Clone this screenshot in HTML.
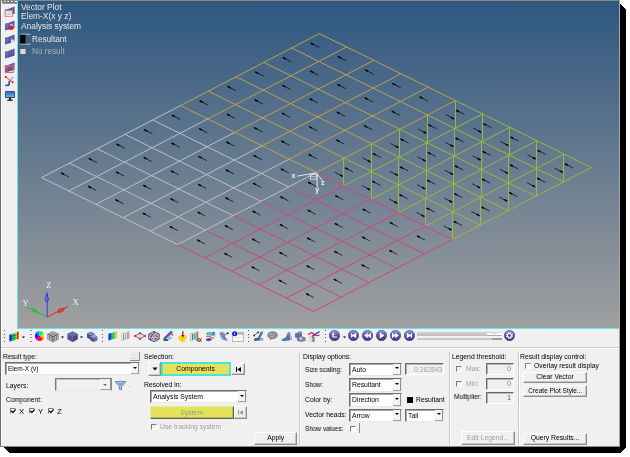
<!DOCTYPE html>
<html><head><meta charset="utf-8">
<style>
*{box-sizing:border-box}
html,body{margin:0;padding:0;background:#fff;width:630px;height:457px;overflow:hidden}
body{position:relative;font-family:"Liberation Sans",sans-serif;-webkit-font-smoothing:antialiased}
.t,.vt{will-change:transform}
.a{position:absolute}
#win{left:0;top:0;width:620px;height:447px;background:#f0f0f0;border:1px solid #8a8a8a;border-left-color:#6c6c6c;border-right-color:#a8a8a8;border-top-color:#8a8686}
#vp{left:18px;top:1px;width:601px;height:327px;background:linear-gradient(#2e5780,#a0a0a0)}
.vt{color:#e6e6e6;font-size:8.4px;line-height:9.3px;white-space:nowrap}
.t{font-size:6.8px;white-space:nowrap;color:#000;line-height:8px}
.dis{color:#a0a0a0}
.combo{background:#fff;border:1px solid;border-color:#6e6e6e #e8e8e8 #e8e8e8 #6e6e6e;box-shadow:inset 1px 1px 0 #a8a8a8}
.combo .dd{position:absolute;right:0;top:0;bottom:0;width:8px;background:#f4f4f4;border-right:1px solid #909090;border-bottom:1px solid #a0a0a0}
.combo .dd:after{content:"";position:absolute;left:2.5px;top:3.8px;border-left:2px solid transparent;border-right:2px solid transparent;border-top:2px solid #000}
.btn{background:#f0f0f0;border:1px solid;border-color:#fff #8c8c8c #8c8c8c #fff;box-shadow:inset -1px -1px 0 #c8c8c8;text-align:center}
.fld{background:#f0f0f0;border:1px solid;border-color:#6a6a6a #fff #fff #6a6a6a;box-shadow:inset 1px 1px 0 #b4b4b4}
.cb{width:6px;height:6px;border:1px solid;border-color:#7a7a7a #fff #fff #7a7a7a;background:#fff}
.sep{width:2px;border-left:1px solid #c8c8c8;border-right:1px solid #fff}
.ybtn{background:#e6e25a;border:2px solid #48e4d8;box-shadow:-1px 0 0 #909080}
.ybtn2{background:#e4e45c;border:1px solid;border-color:#ecec90 #606050 #606050 #ecec90;box-shadow:inset -1px -1px 0 #b8b860}
.cdis{background:#f0f0f0;border-color:#7a7a7a #8a8a8a #e8e8e8 #7a7a7a;box-shadow:inset 1px 1px 0 #c0c0c0}
.ddd:after{border-top-color:#686868 !important}
.cdis .dd{background:#f0f0f0;width:11px;border-left:1px solid #fafafa}
.cdis .dd:after{left:2.5px;top:4.5px}
.cbd{background:#f0f0f0}
.arr .h{stroke-width:1.5;stroke-linecap:round}
</style></head><body>
<svg class="a" style="left:0;top:0" width="630" height="457"><polygon points="620,3.5 626,9.5 626,447 620,453 9.5,453 3.5,447 620,447" fill="#000" shape-rendering="crispEdges"/></svg>
<div id="win" class="a"></div>
<!-- left strip -->
<div class="a" style="left:1px;top:1px;width:1px;height:445px;background:#fcfcfc"></div>
<div class="a" style="left:16px;top:1px;width:1px;height:328px;background:#f8e8e8"></div>
<div class="a" style="left:17px;top:1px;width:1px;height:328px;background:#5fe8ee"></div>
<div class="a" style="left:17px;top:328px;width:602px;height:1px;background:#5fe8ee"></div>
<svg class="a" style="left:2px;top:1px" width="15" height="3"><rect x="0" y="1" width="15" height="1.6" fill="#707070"/><g fill="#6a6a6a"><rect x="0.5" y="0" width="1.5" height="1"/><rect x="3.5" y="0" width="2" height="1"/><rect x="7" y="0" width="2" height="1"/><rect x="10.5" y="0" width="2" height="1"/></g><g fill="#fff"><rect x="2" y="0" width="1.5" height="1"/><rect x="5.5" y="0" width="1.5" height="1"/><rect x="9" y="0" width="1.5" height="1"/><rect x="12.5" y="0" width="1.5" height="1"/></g></svg>
<div id="vp" class="a"></div>
<svg class="a" style="left:0;top:0;will-change:transform" width="630" height="329">
<g fill="none"><line x1="455.35" y1="100.55" x2="591.3" y2="167.5" stroke="#98b83e" stroke-width="1"/><line x1="427.57" y1="114.95" x2="563.52" y2="181.9" stroke="#98b83e" stroke-width="1"/><line x1="399.79" y1="129.34" x2="535.74" y2="196.29" stroke="#98b83e" stroke-width="1"/><line x1="372.01" y1="143.74" x2="507.96" y2="210.69" stroke="#98b83e" stroke-width="1"/><line x1="344.23" y1="158.13" x2="480.18" y2="225.08" stroke="#98b83e" stroke-width="1"/><line x1="482.54" y1="113.94" x2="343.64" y2="185.91" stroke="#98b83e" stroke-width="1"/><line x1="509.73" y1="127.33" x2="370.83" y2="199.31" stroke="#98b83e" stroke-width="1"/><line x1="536.92" y1="140.72" x2="398.02" y2="212.69" stroke="#98b83e" stroke-width="1"/><line x1="564.11" y1="154.11" x2="425.21" y2="226.08" stroke="#98b83e" stroke-width="1"/><line x1="591.3" y1="167.5" x2="452.4" y2="239.47" stroke="#98b83e" stroke-width="1"/><line x1="455.5" y1="100.55" x2="455.5" y2="128.34" stroke="#98b83e" stroke-width="1"/><line x1="482.5" y1="113.94" x2="482.5" y2="141.73" stroke="#98b83e" stroke-width="1"/><line x1="509.5" y1="127.33" x2="509.5" y2="155.12" stroke="#98b83e" stroke-width="1"/><line x1="536.5" y1="140.72" x2="536.5" y2="168.5" stroke="#98b83e" stroke-width="1"/><line x1="563.5" y1="154.11" x2="563.5" y2="181.9" stroke="#98b83e" stroke-width="1"/><line x1="427.5" y1="114.95" x2="427.5" y2="142.73" stroke="#98b83e" stroke-width="1"/><line x1="454.5" y1="128.34" x2="454.5" y2="156.12" stroke="#98b83e" stroke-width="1"/><line x1="481.5" y1="141.73" x2="481.5" y2="169.51" stroke="#98b83e" stroke-width="1"/><line x1="508.5" y1="155.12" x2="508.5" y2="182.9" stroke="#98b83e" stroke-width="1"/><line x1="536.5" y1="168.5" x2="536.5" y2="196.29" stroke="#98b83e" stroke-width="1"/><line x1="399.5" y1="129.34" x2="399.5" y2="157.12" stroke="#98b83e" stroke-width="1"/><line x1="426.5" y1="142.73" x2="426.5" y2="170.51" stroke="#98b83e" stroke-width="1"/><line x1="453.5" y1="156.12" x2="453.5" y2="183.91" stroke="#98b83e" stroke-width="1"/><line x1="481.5" y1="169.51" x2="481.5" y2="197.3" stroke="#98b83e" stroke-width="1"/><line x1="508.5" y1="182.9" x2="508.5" y2="210.69" stroke="#98b83e" stroke-width="1"/><line x1="371.5" y1="143.74" x2="371.5" y2="171.52" stroke="#98b83e" stroke-width="1"/><line x1="398.5" y1="157.12" x2="398.5" y2="184.91" stroke="#98b83e" stroke-width="1"/><line x1="426.5" y1="170.51" x2="426.5" y2="198.3" stroke="#98b83e" stroke-width="1"/><line x1="453.5" y1="183.91" x2="453.5" y2="211.69" stroke="#98b83e" stroke-width="1"/><line x1="480.5" y1="197.3" x2="480.5" y2="225.08" stroke="#98b83e" stroke-width="1"/><line x1="343.5" y1="158.13" x2="343.5" y2="185.91" stroke="#98b83e" stroke-width="1"/><line x1="371.5" y1="171.52" x2="371.5" y2="199.31" stroke="#98b83e" stroke-width="1"/><line x1="398.5" y1="184.91" x2="398.5" y2="212.69" stroke="#98b83e" stroke-width="1"/><line x1="425.5" y1="198.3" x2="425.5" y2="226.08" stroke="#98b83e" stroke-width="1"/><line x1="452.5" y1="211.69" x2="452.5" y2="239.47" stroke="#98b83e" stroke-width="1"/><line x1="316.45" y1="172.52" x2="452.4" y2="239.47" stroke="#c84880" stroke-width="1"/><line x1="288.67" y1="186.92" x2="424.62" y2="253.87" stroke="#c84880" stroke-width="1"/><line x1="260.89" y1="201.31" x2="396.84" y2="268.26" stroke="#c84880" stroke-width="1"/><line x1="233.11" y1="215.71" x2="369.06" y2="282.66" stroke="#c84880" stroke-width="1"/><line x1="205.33" y1="230.11" x2="341.28" y2="297.06" stroke="#c84880" stroke-width="1"/><line x1="177.55" y1="244.5" x2="313.5" y2="311.45" stroke="#c84880" stroke-width="1"/><line x1="343.64" y1="185.91" x2="204.74" y2="257.89" stroke="#c84880" stroke-width="1"/><line x1="370.83" y1="199.31" x2="231.93" y2="271.28" stroke="#c84880" stroke-width="1"/><line x1="398.02" y1="212.69" x2="259.12" y2="284.67" stroke="#c84880" stroke-width="1"/><line x1="425.21" y1="226.08" x2="286.31" y2="298.06" stroke="#c84880" stroke-width="1"/><line x1="452.4" y1="239.47" x2="313.5" y2="311.45" stroke="#c84880" stroke-width="1"/><line x1="152.72" y1="119.97" x2="288.67" y2="186.92" stroke="#bfc0c2" stroke-width="1"/><line x1="124.94" y1="134.37" x2="260.89" y2="201.31" stroke="#bfc0c2" stroke-width="1"/><line x1="97.16" y1="148.76" x2="233.11" y2="215.71" stroke="#bfc0c2" stroke-width="1"/><line x1="69.38" y1="163.16" x2="205.33" y2="230.11" stroke="#bfc0c2" stroke-width="1"/><line x1="41.6" y1="177.55" x2="177.55" y2="244.5" stroke="#bfc0c2" stroke-width="1"/><line x1="180.5" y1="105.57" x2="41.6" y2="177.55" stroke="#bfc0c2" stroke-width="1"/><line x1="207.69" y1="118.96" x2="68.79" y2="190.94" stroke="#bfc0c2" stroke-width="1"/><line x1="234.88" y1="132.35" x2="95.98" y2="204.33" stroke="#bfc0c2" stroke-width="1"/><line x1="262.07" y1="145.75" x2="123.17" y2="217.72" stroke="#bfc0c2" stroke-width="1"/><line x1="289.26" y1="159.13" x2="150.36" y2="231.11" stroke="#bfc0c2" stroke-width="1"/><line x1="316.45" y1="172.52" x2="177.55" y2="244.5" stroke="#bfc0c2" stroke-width="1"/><line x1="319.4" y1="33.6" x2="455.35" y2="100.55" stroke="#c0a04c" stroke-width="1"/><line x1="291.62" y1="48" x2="427.57" y2="114.95" stroke="#c0a04c" stroke-width="1"/><line x1="263.84" y1="62.39" x2="399.79" y2="129.34" stroke="#c0a04c" stroke-width="1"/><line x1="236.06" y1="76.78" x2="372.01" y2="143.74" stroke="#c0a04c" stroke-width="1"/><line x1="208.28" y1="91.18" x2="344.23" y2="158.13" stroke="#c0a04c" stroke-width="1"/><line x1="180.5" y1="105.57" x2="316.45" y2="172.52" stroke="#c0a04c" stroke-width="1"/><line x1="319.4" y1="33.6" x2="180.5" y2="105.57" stroke="#c0a04c" stroke-width="1"/><line x1="346.59" y1="46.99" x2="207.69" y2="118.96" stroke="#c0a04c" stroke-width="1"/><line x1="373.78" y1="60.38" x2="234.88" y2="132.35" stroke="#c0a04c" stroke-width="1"/><line x1="400.97" y1="73.77" x2="262.07" y2="145.75" stroke="#c0a04c" stroke-width="1"/><line x1="428.16" y1="87.16" x2="289.26" y2="159.13" stroke="#c0a04c" stroke-width="1"/><line x1="455.35" y1="100.55" x2="316.45" y2="172.52" stroke="#c0a04c" stroke-width="1"/></g><g stroke="#000" stroke-width=".7" class="arr"><line x1="319.11" y1="47.49" x2="311.11" y2="43.29"/><line class="h" x1="313.11" y1="44.34" x2="311.11" y2="43.29"/><line x1="346.3" y1="60.88" x2="338.34" y2="56.71"/><line class="h" x1="340.33" y1="57.75" x2="338.34" y2="56.71"/><line x1="373.49" y1="74.27" x2="365.58" y2="70.12"/><line class="h" x1="367.56" y1="71.16" x2="365.58" y2="70.12"/><line x1="400.68" y1="87.66" x2="392.82" y2="83.54"/><line class="h" x1="394.78" y1="84.57" x2="392.82" y2="83.54"/><line x1="427.87" y1="101.05" x2="420.06" y2="96.95"/><line class="h" x1="422.01" y1="97.98" x2="420.06" y2="96.95"/><line x1="445.89" y1="114.61" x2="453.49" y2="118.61"/><line class="h" x1="451.59" y1="117.61" x2="453.49" y2="118.61"/><line x1="464.22" y1="114.28" x2="456.62" y2="110.48"/><line class="h" x1="458.52" y1="111.43" x2="456.62" y2="110.48"/><line x1="473.08" y1="128" x2="480.68" y2="132"/><line class="h" x1="478.78" y1="131" x2="480.68" y2="132"/><line x1="491.41" y1="127.67" x2="483.81" y2="123.87"/><line class="h" x1="485.71" y1="124.82" x2="483.81" y2="123.87"/><line x1="500.27" y1="141.39" x2="507.87" y2="145.39"/><line class="h" x1="505.97" y1="144.39" x2="507.87" y2="145.39"/><line x1="518.6" y1="141.06" x2="511" y2="137.25"/><line class="h" x1="512.9" y1="138.2" x2="511" y2="137.25"/><line x1="527.46" y1="154.78" x2="535.06" y2="158.78"/><line class="h" x1="533.16" y1="157.78" x2="535.06" y2="158.78"/><line x1="545.79" y1="154.45" x2="538.19" y2="150.65"/><line class="h" x1="540.09" y1="151.59" x2="538.19" y2="150.65"/><line x1="554.65" y1="168.17" x2="562.25" y2="172.17"/><line class="h" x1="560.35" y1="171.17" x2="562.25" y2="172.17"/><line x1="572.98" y1="167.84" x2="565.38" y2="164.03"/><line class="h" x1="567.28" y1="164.98" x2="565.38" y2="164.03"/><line x1="291.32" y1="61.89" x2="283.37" y2="57.71"/><line class="h" x1="285.36" y1="58.76" x2="283.37" y2="57.71"/><line x1="318.51" y1="75.28" x2="310.61" y2="71.13"/><line class="h" x1="312.59" y1="72.17" x2="310.61" y2="71.13"/><line x1="345.7" y1="88.67" x2="337.85" y2="84.54"/><line class="h" x1="339.81" y1="85.57" x2="337.85" y2="84.54"/><line x1="372.89" y1="102.06" x2="365.09" y2="97.96"/><line class="h" x1="367.04" y1="98.98" x2="365.09" y2="97.96"/><line x1="400.08" y1="115.45" x2="392.32" y2="111.37"/><line class="h" x1="394.26" y1="112.39" x2="392.32" y2="111.37"/><line x1="418.11" y1="129.01" x2="425.71" y2="133.01"/><line class="h" x1="423.81" y1="132.01" x2="425.71" y2="133.01"/><line x1="436.44" y1="128.67" x2="428.84" y2="124.87"/><line class="h" x1="430.74" y1="125.82" x2="428.84" y2="124.87"/><line x1="445.3" y1="142.4" x2="452.9" y2="146.4"/><line class="h" x1="451" y1="145.4" x2="452.9" y2="146.4"/><line x1="463.63" y1="142.06" x2="456.03" y2="138.26"/><line class="h" x1="457.93" y1="139.21" x2="456.03" y2="138.26"/><line x1="472.49" y1="155.78" x2="480.09" y2="159.78"/><line class="h" x1="478.19" y1="158.78" x2="480.09" y2="159.78"/><line x1="490.82" y1="155.45" x2="483.22" y2="151.65"/><line class="h" x1="485.12" y1="152.6" x2="483.22" y2="151.65"/><line x1="499.68" y1="169.17" x2="507.28" y2="173.17"/><line class="h" x1="505.38" y1="172.17" x2="507.28" y2="173.17"/><line x1="518.01" y1="168.84" x2="510.41" y2="165.04"/><line class="h" x1="512.31" y1="165.99" x2="510.41" y2="165.04"/><line x1="526.87" y1="182.56" x2="534.47" y2="186.56"/><line class="h" x1="532.57" y1="185.56" x2="534.47" y2="186.56"/><line x1="545.2" y1="182.23" x2="537.6" y2="178.43"/><line class="h" x1="539.5" y1="179.38" x2="537.6" y2="178.43"/><line x1="263.55" y1="76.28" x2="255.64" y2="72.13"/><line class="h" x1="257.62" y1="73.17" x2="255.64" y2="72.13"/><line x1="290.74" y1="89.67" x2="282.88" y2="85.55"/><line class="h" x1="284.84" y1="86.58" x2="282.88" y2="85.55"/><line x1="317.93" y1="103.06" x2="310.12" y2="98.96"/><line class="h" x1="312.07" y1="99.99" x2="310.12" y2="98.96"/><line x1="345.12" y1="116.45" x2="337.36" y2="112.38"/><line class="h" x1="339.3" y1="113.4" x2="337.36" y2="112.38"/><line x1="372.31" y1="129.84" x2="364.59" y2="125.79"/><line class="h" x1="366.52" y1="126.81" x2="364.59" y2="125.79"/><line x1="390.33" y1="143.4" x2="397.93" y2="147.4"/><line class="h" x1="396.03" y1="146.4" x2="397.93" y2="147.4"/><line x1="408.66" y1="143.07" x2="401.06" y2="139.27"/><line class="h" x1="402.96" y1="140.22" x2="401.06" y2="139.27"/><line x1="417.52" y1="156.79" x2="425.12" y2="160.79"/><line class="h" x1="423.22" y1="159.79" x2="425.12" y2="160.79"/><line x1="435.85" y1="156.46" x2="428.25" y2="152.66"/><line class="h" x1="430.15" y1="153.6" x2="428.25" y2="152.66"/><line x1="444.71" y1="170.18" x2="452.31" y2="174.18"/><line class="h" x1="450.41" y1="173.18" x2="452.31" y2="174.18"/><line x1="463.04" y1="169.84" x2="455.44" y2="166.04"/><line class="h" x1="457.34" y1="166.99" x2="455.44" y2="166.04"/><line x1="471.9" y1="183.57" x2="479.5" y2="187.57"/><line class="h" x1="477.6" y1="186.57" x2="479.5" y2="187.57"/><line x1="490.23" y1="183.23" x2="482.63" y2="179.43"/><line class="h" x1="484.53" y1="180.38" x2="482.63" y2="179.43"/><line x1="499.09" y1="196.96" x2="506.69" y2="200.96"/><line class="h" x1="504.79" y1="199.96" x2="506.69" y2="200.96"/><line x1="517.42" y1="196.62" x2="509.82" y2="192.82"/><line class="h" x1="511.72" y1="193.77" x2="509.82" y2="192.82"/><line x1="235.76" y1="90.68" x2="227.91" y2="86.55"/><line class="h" x1="229.87" y1="87.58" x2="227.91" y2="86.55"/><line x1="262.95" y1="104.07" x2="255.15" y2="99.97"/><line class="h" x1="257.1" y1="100.99" x2="255.15" y2="99.97"/><line x1="290.14" y1="117.46" x2="282.38" y2="113.38"/><line class="h" x1="284.32" y1="114.4" x2="282.38" y2="113.38"/><line x1="317.33" y1="130.85" x2="309.62" y2="126.8"/><line class="h" x1="311.55" y1="127.81" x2="309.62" y2="126.8"/><line x1="344.52" y1="144.24" x2="336.86" y2="140.21"/><line class="h" x1="338.78" y1="141.22" x2="336.86" y2="140.21"/><line x1="362.55" y1="157.79" x2="370.15" y2="161.79"/><line class="h" x1="368.25" y1="160.79" x2="370.15" y2="161.79"/><line x1="380.88" y1="157.46" x2="373.28" y2="153.66"/><line class="h" x1="375.18" y1="154.61" x2="373.28" y2="153.66"/><line x1="389.74" y1="171.19" x2="397.34" y2="175.19"/><line class="h" x1="395.44" y1="174.19" x2="397.34" y2="175.19"/><line x1="408.07" y1="170.85" x2="400.47" y2="167.05"/><line class="h" x1="402.37" y1="168" x2="400.47" y2="167.05"/><line x1="416.93" y1="184.58" x2="424.53" y2="188.58"/><line class="h" x1="422.63" y1="187.58" x2="424.53" y2="188.58"/><line x1="435.26" y1="184.24" x2="427.66" y2="180.44"/><line class="h" x1="429.56" y1="181.39" x2="427.66" y2="180.44"/><line x1="444.12" y1="197.97" x2="451.72" y2="201.97"/><line class="h" x1="449.82" y1="200.97" x2="451.72" y2="201.97"/><line x1="462.45" y1="197.63" x2="454.85" y2="193.83"/><line class="h" x1="456.75" y1="194.78" x2="454.85" y2="193.83"/><line x1="471.31" y1="211.36" x2="478.91" y2="215.36"/><line class="h" x1="477.01" y1="214.36" x2="478.91" y2="215.36"/><line x1="489.64" y1="211.02" x2="482.04" y2="207.22"/><line class="h" x1="483.94" y1="208.17" x2="482.04" y2="207.22"/><line x1="207.98" y1="105.07" x2="200.18" y2="100.97"/><line class="h" x1="202.13" y1="102" x2="200.18" y2="100.97"/><line x1="235.17" y1="118.46" x2="227.41" y2="114.39"/><line class="h" x1="229.35" y1="115.41" x2="227.41" y2="114.39"/><line x1="262.37" y1="131.85" x2="254.65" y2="127.8"/><line class="h" x1="256.58" y1="128.82" x2="254.65" y2="127.8"/><line x1="289.56" y1="145.24" x2="281.89" y2="141.22"/><line class="h" x1="283.81" y1="142.22" x2="281.89" y2="141.22"/><line x1="316.75" y1="158.63" x2="309.13" y2="154.63"/><line class="h" x1="311.03" y1="155.63" x2="309.13" y2="154.63"/><line x1="334.77" y1="172.19" x2="342.37" y2="176.19"/><line class="h" x1="340.47" y1="175.19" x2="342.37" y2="176.19"/><line x1="353.1" y1="171.85" x2="345.5" y2="168.05"/><line class="h" x1="347.4" y1="169" x2="345.5" y2="168.05"/><line x1="361.96" y1="185.58" x2="369.56" y2="189.58"/><line class="h" x1="367.66" y1="188.58" x2="369.56" y2="189.58"/><line x1="380.29" y1="185.25" x2="372.69" y2="181.45"/><line class="h" x1="374.59" y1="182.4" x2="372.69" y2="181.45"/><line x1="389.15" y1="198.97" x2="396.75" y2="202.97"/><line class="h" x1="394.85" y1="201.97" x2="396.75" y2="202.97"/><line x1="407.48" y1="198.63" x2="399.88" y2="194.83"/><line class="h" x1="401.78" y1="195.78" x2="399.88" y2="194.83"/><line x1="416.34" y1="212.36" x2="423.94" y2="216.36"/><line class="h" x1="422.04" y1="215.36" x2="423.94" y2="216.36"/><line x1="434.67" y1="212.03" x2="427.07" y2="208.22"/><line class="h" x1="428.97" y1="209.17" x2="427.07" y2="208.22"/><line x1="443.53" y1="225.75" x2="451.13" y2="229.75"/><line class="h" x1="449.23" y1="228.75" x2="451.13" y2="229.75"/><line x1="461.86" y1="225.41" x2="454.26" y2="221.61"/><line class="h" x1="456.16" y1="222.56" x2="454.26" y2="221.61"/><line x1="180.2" y1="119.47" x2="172.44" y2="115.39"/><line class="h" x1="174.38" y1="116.41" x2="172.44" y2="115.39"/><line x1="207.39" y1="132.86" x2="199.68" y2="128.81"/><line class="h" x1="201.61" y1="129.82" x2="199.68" y2="128.81"/><line x1="234.58" y1="146.25" x2="226.92" y2="142.22"/><line class="h" x1="228.84" y1="143.23" x2="226.92" y2="142.22"/><line x1="261.77" y1="159.64" x2="254.16" y2="155.64"/><line class="h" x1="256.06" y1="156.64" x2="254.16" y2="155.64"/><line x1="288.96" y1="173.03" x2="281.4" y2="169.05"/><line class="h" x1="283.29" y1="170.05" x2="281.4" y2="169.05"/><line x1="316.15" y1="186.42" x2="308.63" y2="182.47"/><line class="h" x1="310.51" y1="183.46" x2="308.63" y2="182.47"/><line x1="343.34" y1="199.81" x2="335.87" y2="195.88"/><line class="h" x1="337.74" y1="196.87" x2="335.87" y2="195.88"/><line x1="370.53" y1="213.2" x2="363.11" y2="209.3"/><line class="h" x1="364.97" y1="210.27" x2="363.11" y2="209.3"/><line x1="397.72" y1="226.59" x2="390.35" y2="222.72"/><line class="h" x1="392.19" y1="223.68" x2="390.35" y2="222.72"/><line x1="424.91" y1="239.98" x2="417.59" y2="236.13"/><line class="h" x1="419.42" y1="237.09" x2="417.59" y2="236.13"/><line x1="152.42" y1="133.86" x2="144.71" y2="129.81"/><line class="h" x1="146.64" y1="130.83" x2="144.71" y2="129.81"/><line x1="179.61" y1="147.25" x2="171.95" y2="143.23"/><line class="h" x1="173.87" y1="144.23" x2="171.95" y2="143.23"/><line x1="206.81" y1="160.64" x2="199.19" y2="156.64"/><line class="h" x1="201.09" y1="157.64" x2="199.19" y2="156.64"/><line x1="234" y1="174.03" x2="226.43" y2="170.06"/><line class="h" x1="228.32" y1="171.05" x2="226.43" y2="170.06"/><line x1="261.19" y1="187.42" x2="253.66" y2="183.47"/><line class="h" x1="255.54" y1="184.46" x2="253.66" y2="183.47"/><line x1="288.38" y1="200.81" x2="280.9" y2="196.89"/><line class="h" x1="282.77" y1="197.87" x2="280.9" y2="196.89"/><line x1="315.56" y1="214.2" x2="308.14" y2="210.3"/><line class="h" x1="310" y1="211.28" x2="308.14" y2="210.3"/><line x1="342.75" y1="227.59" x2="335.38" y2="223.72"/><line class="h" x1="337.22" y1="224.69" x2="335.38" y2="223.72"/><line x1="369.94" y1="240.98" x2="362.62" y2="237.14"/><line class="h" x1="364.45" y1="238.1" x2="362.62" y2="237.14"/><line x1="397.13" y1="254.37" x2="389.86" y2="250.55"/><line class="h" x1="391.68" y1="251.51" x2="389.86" y2="250.55"/><line x1="124.64" y1="148.26" x2="116.98" y2="144.23"/><line class="h" x1="118.9" y1="145.24" x2="116.98" y2="144.23"/><line x1="151.83" y1="161.65" x2="144.22" y2="157.65"/><line class="h" x1="146.12" y1="158.65" x2="144.22" y2="157.65"/><line x1="179.02" y1="175.04" x2="171.46" y2="171.06"/><line class="h" x1="173.35" y1="172.06" x2="171.46" y2="171.06"/><line x1="206.21" y1="188.43" x2="198.69" y2="184.48"/><line class="h" x1="200.57" y1="185.47" x2="198.69" y2="184.48"/><line x1="233.4" y1="201.82" x2="225.93" y2="197.89"/><line class="h" x1="227.8" y1="198.88" x2="225.93" y2="197.89"/><line x1="260.59" y1="215.21" x2="253.17" y2="211.31"/><line class="h" x1="255.03" y1="212.28" x2="253.17" y2="211.31"/><line x1="287.78" y1="228.6" x2="280.41" y2="224.73"/><line class="h" x1="282.25" y1="225.69" x2="280.41" y2="224.73"/><line x1="314.97" y1="241.99" x2="307.65" y2="238.14"/><line class="h" x1="309.48" y1="239.1" x2="307.65" y2="238.14"/><line x1="342.16" y1="255.38" x2="334.88" y2="251.56"/><line class="h" x1="336.7" y1="252.51" x2="334.88" y2="251.56"/><line x1="369.35" y1="268.77" x2="362.12" y2="264.97"/><line class="h" x1="363.93" y1="265.92" x2="362.12" y2="264.97"/><line x1="96.86" y1="162.65" x2="89.25" y2="158.65"/><line class="h" x1="91.15" y1="159.65" x2="89.25" y2="158.65"/><line x1="124.05" y1="176.04" x2="116.49" y2="172.07"/><line class="h" x1="118.38" y1="173.06" x2="116.49" y2="172.07"/><line x1="151.25" y1="189.43" x2="143.72" y2="185.48"/><line class="h" x1="145.6" y1="186.47" x2="143.72" y2="185.48"/><line x1="178.44" y1="202.82" x2="170.96" y2="198.9"/><line class="h" x1="172.83" y1="199.88" x2="170.96" y2="198.9"/><line x1="205.62" y1="216.21" x2="198.2" y2="212.31"/><line class="h" x1="200.06" y1="213.29" x2="198.2" y2="212.31"/><line x1="232.81" y1="229.6" x2="225.44" y2="225.73"/><line class="h" x1="227.28" y1="226.7" x2="225.44" y2="225.73"/><line x1="260" y1="242.99" x2="252.68" y2="239.15"/><line class="h" x1="254.51" y1="240.11" x2="252.68" y2="239.15"/><line x1="287.19" y1="256.38" x2="279.92" y2="252.56"/><line class="h" x1="281.74" y1="253.52" x2="279.92" y2="252.56"/><line x1="314.38" y1="269.77" x2="307.15" y2="265.98"/><line class="h" x1="308.96" y1="266.92" x2="307.15" y2="265.98"/><line x1="341.57" y1="283.16" x2="334.39" y2="279.39"/><line class="h" x1="336.19" y1="280.33" x2="334.39" y2="279.39"/><line x1="69.08" y1="177.05" x2="61.52" y2="173.07"/><line class="h" x1="63.41" y1="174.07" x2="61.52" y2="173.07"/><line x1="96.27" y1="190.44" x2="88.75" y2="186.49"/><line class="h" x1="90.63" y1="187.48" x2="88.75" y2="186.49"/><line x1="123.46" y1="203.83" x2="115.99" y2="199.9"/><line class="h" x1="117.86" y1="200.89" x2="115.99" y2="199.9"/><line x1="150.65" y1="217.22" x2="143.23" y2="213.32"/><line class="h" x1="145.09" y1="214.29" x2="143.23" y2="213.32"/><line x1="177.84" y1="230.61" x2="170.47" y2="226.74"/><line class="h" x1="172.31" y1="227.7" x2="170.47" y2="226.74"/><line x1="205.03" y1="244" x2="197.71" y2="240.15"/><line class="h" x1="199.54" y1="241.11" x2="197.71" y2="240.15"/><line x1="232.22" y1="257.39" x2="224.94" y2="253.57"/><line class="h" x1="226.76" y1="254.52" x2="224.94" y2="253.57"/><line x1="259.41" y1="270.78" x2="252.18" y2="266.98"/><line class="h" x1="253.99" y1="267.93" x2="252.18" y2="266.98"/><line x1="286.6" y1="284.17" x2="279.42" y2="280.4"/><line class="h" x1="281.22" y1="281.34" x2="279.42" y2="280.4"/><line x1="313.79" y1="297.56" x2="306.66" y2="293.81"/><line class="h" x1="308.44" y1="294.75" x2="306.66" y2="293.81"/></g><g fill="none" stroke="#f0f0f0" stroke-width=".9"><path d="M316.7 172.8 L297 176.1 M317.2 173.3 V187.8 M317.2 173.9 L322.5 180.8"/><rect x="310.3" y="174.2" width="6" height="5" stroke-width=".7"/><path d="M310.5 176.7 H316" stroke-width=".6"/></g>
<g fill="#f4f4f4" font-family="Liberation Sans" font-size="7" font-weight="bold"><text x="291.6" y="177.6">x</text><text x="315.2" y="192.4">y</text><text x="321" y="184.6">z</text></g>
<g stroke-width="1"><path d="M47.2 317 V293" stroke="#3040e0"/><path d="M47.2 317 L26.5 307.2" stroke="#20c020"/><path d="M47.2 317 L68 306.5" stroke="#e02020"/></g>
<g><ellipse cx="46.8" cy="299" rx="1.6" ry="3" fill="none" stroke="#3040e0" stroke-width="1"/><path d="M46.8 291.5 L45.5 296 H48Z" fill="#3040e0"/>
<ellipse cx="34.5" cy="310.3" rx="3" ry="1.4" transform="rotate(25 34.5 310.3)" fill="none" stroke="#20c020" stroke-width="1"/>
<ellipse cx="61" cy="310.2" rx="3.2" ry="1.4" transform="rotate(-27 61 310.2)" fill="none" stroke="#e02020" stroke-width="1"/></g>
<g fill="#f0f0f0" font-family="Liberation Serif" font-size="8.6"><text x="46.3" y="288.2">Z</text><text x="22.5" y="305.6">Y</text><text x="72.4" y="305.2">X</text></g>
<rect x="20.2" y="34.2" width="5.2" height="9.8" fill="#000"/><path d="M20 34.2 H30.5 M20 44.2 H30.5" stroke="#b8c8d8" stroke-width=".9"/>
<rect x="20.3" y="49" width="5.3" height="5" fill="#d8d8d8"/>
</svg>
<!-- viewport text -->
<div class="a vt" style="left:20.6px;top:3.3px">Vector Plot</div>
<div class="a vt" style="left:20.6px;top:12.4px">Elem-X(x y z)</div>
<div class="a vt" style="left:20.6px;top:21.6px">Analysis system</div>
<div class="a vt" style="left:32px;top:34.6px;font-size:8.2px">Resultant</div>
<div class="a vt" style="left:32px;top:46.6px;font-size:8.2px;color:#a8b0b8">No result</div>
<svg class="a" style="left:3.5px;top:6px" width="12" height="11" viewBox="0 0 12 11"><path d="M1 3.5 Q5 3 10.5 0.5 V7.5 Q5.5 9.5 1 10.5Z" fill="url(#fl)"/><g stroke="#a0a0e0" stroke-width=".4" opacity=".7"><path d="M3.5 3.2V9.8M6 2.7V9.3M8.5 1.5V8.5M1 6 Q5 5.5 10.5 3M1 8.3 Q5 7.6 10.5 5.3"/></g><rect x="1.2" y="4.6" width="7.2" height="6.2" fill="#e4f2f6" stroke="#f07060" stroke-width="1"/><path d="M3 7H7M3 8.5H7" stroke="#a0a0a0" stroke-width=".5"/></svg>
<svg class="a" style="left:3.5px;top:19.8px" width="12" height="11" viewBox="0 0 12 11"><path d="M1 3.5 Q5 3 10.5 0.5 V7.5 Q5.5 9.5 1 10.5Z" fill="url(#fl)"/><g stroke="#a0a0e0" stroke-width=".4" opacity=".7"><path d="M3.5 3.2V9.8M6 2.7V9.3M8.5 1.5V8.5M1 6 Q5 5.5 10.5 3M1 8.3 Q5 7.6 10.5 5.3"/></g><path d="M5 6.5 Q9 5 10.5 7.5 Q9 10.5 5.5 10Z" fill="#f01010"/><path d="M6 5 Q8 4 9.5 6" stroke="#fff" stroke-width="1" fill="none"/></svg>
<svg class="a" style="left:3.5px;top:33.8px" width="12" height="11" viewBox="0 0 12 11"><path d="M1 3.5 Q5 3 10.5 0.5 V7.5 Q5.5 9.5 1 10.5Z" fill="url(#fl)"/><g stroke="#a0a0e0" stroke-width=".4" opacity=".7"><path d="M3.5 3.2V9.8M6 2.7V9.3M8.5 1.5V8.5M1 6 Q5 5.5 10.5 3M1 8.3 Q5 7.6 10.5 5.3"/></g><path d="M7 5 L10.5 6 V9 L7 10Z" fill="#f4f4f4" opacity=".8"/></svg>
<svg class="a" style="left:3.5px;top:47.5px" width="12" height="11" viewBox="0 0 12 11"><path d="M1 3.5 Q5 3 10.5 0.5 V7.5 Q5.5 9.5 1 10.5Z" fill="url(#fl)"/><g stroke="#a0a0e0" stroke-width=".4" opacity=".7"><path d="M3.5 3.2V9.8M6 2.7V9.3M8.5 1.5V8.5M1 6 Q5 5.5 10.5 3M1 8.3 Q5 7.6 10.5 5.3"/></g></svg>
<svg class="a" style="left:3.5px;top:61.8px" width="12" height="11" viewBox="0 0 12 11"><path d="M1 3.5 Q5 3 10.5 0.5 V7.5 Q5.5 9.5 1 10.5Z" fill="url(#fl)"/><g stroke="#a0a0e0" stroke-width=".4" opacity=".7"><path d="M3.5 3.2V9.8M6 2.7V9.3M8.5 1.5V8.5M1 6 Q5 5.5 10.5 3M1 8.3 Q5 7.6 10.5 5.3"/></g><rect x="1.3" y="4" width="8" height="6.5" fill="none" stroke="#f06050" stroke-width="1.2"/></svg>
<svg class="a" style="left:4px;top:75.5px" width="11" height="11" viewBox="0 0 11 11"><path d="M8.5 1.5 L5.5 5.5" stroke="#b4c4dc" stroke-width="2.4" stroke-linecap="round"/><path d="M4.4 5 L6 5 L6 8.2 Q6 10.2 3.6 10.2 L1.5 10.2 Q0.8 9.3 1.3 8.4 L3.2 8.4 Q4.4 8.4 4.4 7.3Z" fill="#3a5aa0"/><path d="M1.8 1 L8.5 6.2" stroke="#f02828" stroke-width=".9"/><circle cx="1.8" cy="1" r="1.1" fill="#f02828"/><circle cx="8.6" cy="6.2" r="1.1" fill="#f02828"/></svg>
<svg class="a" style="left:4.5px;top:90.5px" width="10" height="11" viewBox="0 0 10 11"><defs><linearGradient id="scr" x1="0" y1="0" x2="0" y2="1"><stop offset="0" stop-color="#2a64c8"/><stop offset="1" stop-color="#78b4f0"/></linearGradient></defs><rect x="0.6" y="0.6" width="8.8" height="6" fill="url(#scr)" stroke="#2a3450" stroke-width=".8"/><rect x="4" y="6.8" width="2" height="1.8" fill="#101010"/><rect x="2.3" y="8.5" width="5.4" height="1.3" fill="#101010"/></svg>
<svg width="0" height="0" style="position:absolute"><defs><linearGradient id="rb" x1="0" x2="1" y1="0" y2="0"><stop offset="0" stop-color="#1028e0"/><stop offset=".2" stop-color="#1040f0"/><stop offset=".35" stop-color="#00c8f0"/><stop offset=".5" stop-color="#00e060"/><stop offset=".65" stop-color="#60e000"/><stop offset=".78" stop-color="#f0e000"/><stop offset=".88" stop-color="#f02000"/><stop offset="1" stop-color="#c02000"/></linearGradient>
<linearGradient id="rb2" x1="0" x2="1" y1="0" y2="0"><stop offset="0" stop-color="#1020a0"/><stop offset=".25" stop-color="#1050f0"/><stop offset=".45" stop-color="#00c8e8"/><stop offset=".65" stop-color="#20d040"/><stop offset=".85" stop-color="#f0e000"/><stop offset="1" stop-color="#f08000"/></linearGradient>
<linearGradient id="mb" x1="0" y1="0" x2="0" y2="1"><stop offset="0" stop-color="#a0a0e8"/><stop offset=".45" stop-color="#5a5aa8"/><stop offset="1" stop-color="#3a3a84"/></linearGradient>
<linearGradient id="fl" x1="0" x2="1" y1="0" y2="1"><stop offset="0" stop-color="#7878c0"/><stop offset="1" stop-color="#303080"/></linearGradient>
<linearGradient id="bl" x1="0" x2="1" y1="0" y2="1"><stop offset="0" stop-color="#8aa0d0"/><stop offset="1" stop-color="#3a5a98"/></linearGradient>
<radialGradient id="gb" cx=".4" cy=".35" r=".7"><stop offset="0" stop-color="#c8c8c8"/><stop offset="1" stop-color="#8c8c8c"/></radialGradient></defs></svg>
<div class="a" style="left:4px;top:330px;width:1px;height:1px;background:#505050"></div><div class="a" style="left:4px;top:334px;width:1px;height:1px;background:#505050"></div><div class="a" style="left:4px;top:337px;width:1px;height:1px;background:#505050"></div><div class="a" style="left:4px;top:341px;width:1px;height:1px;background:#505050"></div>
<svg class="a" style="left:9px;top:330.5px" width="10" height="11" viewBox="0 0 10 11"><path d="M0.3 3.8 Q5 3 9.6 0.3 V8 Q5 9.5 0.3 10.6 Z" fill="url(#rb)"/><g stroke="#000" stroke-opacity=".12" stroke-width=".5"><path d="M2.5 3.5V10M5 3.2V9.6M7.5 2V9"/><path d="M0.3 6 Q5 5.5 9.6 3M0.3 8.3Q5 7.7 9.6 5.5"/></g></svg>
<svg class="a" style="left:22px;top:336px" width="4" height="3" viewBox="0 0 4 3"><path d="M0 0.5H3L1.5 2.2z" fill="#000"/></svg>
<div class="a" style="left:29.5px;top:330px;width:2px;height:1px;background:#909090"></div><div class="a" style="left:29.5px;top:334px;width:2px;height:1px;background:#909090"></div><div class="a" style="left:29.5px;top:337px;width:2px;height:1px;background:#909090"></div><div class="a" style="left:29.5px;top:341px;width:2px;height:1px;background:#909090"></div>
<div class="a" style="left:34.8px;top:331.2px;width:9.6px;height:9.6px;border-radius:50%;background:conic-gradient(#00e8e8,#30e030 40deg,#f0f000 90deg,#ff8000 120deg,#ff0000 160deg,#ff00c0 210deg,#3000ff 270deg,#0080ff 320deg,#00e8e8)"></div>
<svg class="a" style="left:47.4px;top:330.8px" width="12" height="12" viewBox="0 0 12 12"><path d="M6 0.5 L11.3 3.15 V8.35 L6 11 L0.7 8.35 V3.15 Z" fill="#fafafa"/><path d="M0.7 3.15 L6 5.8 M0.7 3.15 L6 0.5 M2.47 2.27 L7.77 4.92 M2.47 4.03 L7.77 1.38 M4.23 1.38 L9.53 4.03 M4.23 4.92 L9.53 2.27 M6 0.5 L11.3 3.15 M6 5.8 L11.3 3.15 M0.7 3.15 L0.7 8.35 M0.7 3.15 L6 5.8 M2.47 4.03 L2.47 9.23 M0.7 4.88 L6 7.53 M4.23 4.92 L4.23 10.12 M0.7 6.62 L6 9.27 M6 5.8 L6 11 M0.7 8.35 L6 11 M6 5.8 L6 11 M6 5.8 L11.3 3.15 M7.77 4.92 L7.77 10.12 M6 7.53 L11.3 4.88 M9.53 4.03 L9.53 9.23 M6 9.27 L11.3 6.62 M11.3 3.15 L11.3 8.35 M6 11 L11.3 8.35" stroke="#1c1c1c" stroke-width=".42" fill="none"/></svg>
<svg class="a" style="left:61.3px;top:336px" width="4" height="3" viewBox="0 0 4 3"><path d="M0 0.5H3L1.5 2.2z" fill="#000"/></svg>
<svg class="a" style="left:66.6px;top:330.8px" width="12" height="12" viewBox="0 0 12 12"><path d="M5.5 0.5 L10.6 3.1 V8.3 L5.5 10.9 L0.4 8.3 V3.1 Z" fill="#40407e"/><path d="M5.5 0.5 L10.6 3.1 L5.5 5.7 L0.4 3.1Z" fill="#5a5aa8"/><path d="M5.5 5.7 L10.6 3.1 V8.3 L5.5 10.9Z" fill="#363672"/><path d="M0.4 3.1 L5.5 5.7 M0.4 3.1 L5.5 0.5 M2.1 2.23 L7.2 4.83 M2.1 3.97 L7.2 1.37 M3.8 1.37 L8.9 3.97 M3.8 4.83 L8.9 2.23 M5.5 0.5 L10.6 3.1 M5.5 5.7 L10.6 3.1 M0.4 3.1 L0.4 8.3 M0.4 3.1 L5.5 5.7 M2.1 3.97 L2.1 9.17 M0.4 4.83 L5.5 7.43 M3.8 4.83 L3.8 10.03 M0.4 6.57 L5.5 9.17 M5.5 5.7 L5.5 10.9 M0.4 8.3 L5.5 10.9 M5.5 5.7 L5.5 10.9 M5.5 5.7 L10.6 3.1 M7.2 4.83 L7.2 10.03 M5.5 7.43 L10.6 4.83 M8.9 3.97 L8.9 9.17 M5.5 9.17 L10.6 6.57 M10.6 3.1 L10.6 8.3 M5.5 10.9 L10.6 8.3" stroke="#a8a8e8" stroke-width=".35" fill="none" opacity=".5"/></svg>
<svg class="a" style="left:80.2px;top:336px" width="4" height="3" viewBox="0 0 4 3"><path d="M0 0.5H3L1.5 2.2z" fill="#000"/></svg>
<svg class="a" style="left:85.8px;top:330.8px" width="12" height="12" viewBox="0 0 12 12"><path d="M1 2.6 L4.8 0.7 L8.4 2.6 V6.8 L4.8 8.7 L1 6.8Z" fill="#4c5488"/><path d="M1 2.6 L4.8 0.7 L8.4 2.6 L4.8 4.5Z" fill="#8088c0"/><path d="M4.2 5.4 L7.7 3.6 L11.2 5.4 V9.3 L7.7 11 L4.2 9.3Z" fill="#4c5488"/><path d="M4.2 5.4 L7.7 3.6 L11.2 5.4 L7.7 7.2Z" fill="#98a0d0"/><path d="M7.7 7.2 L11.2 5.4 V9.3 L7.7 11Z" fill="#6870a8"/></svg>
<div class="a" style="left:102px;top:330px;width:1px;height:1px;background:#505050"></div><div class="a" style="left:102px;top:334px;width:1px;height:1px;background:#505050"></div><div class="a" style="left:102px;top:337px;width:1px;height:1px;background:#505050"></div><div class="a" style="left:102px;top:341px;width:1px;height:1px;background:#505050"></div>
<svg class="a" style="left:107.6px;top:331px" width="9" height="10" viewBox="0 0 9 10"><path d="M0.5 2.5 Q4.5 2.2 8.6 0.2 V7.2 Q4.5 8.2 0.5 9.6 Z" fill="url(#rb2)"/></svg>
<svg class="a" style="left:121.4px;top:331px" width="9" height="10" viewBox="0 0 9 10"><path d="M0.5 2.5 Q4.5 2.2 8.6 0.2 V7.2 Q4.5 8.2 0.5 9.6 Z" fill="#f4f4f4" stroke="#b8b8b8" stroke-width=".6"/><path d="M2.6 2.6V8.6" stroke="#4080e0" stroke-width="1"/><path d="M4.8 2.2V8" stroke="#40c040" stroke-width="1"/><path d="M7 1.2V7.4" stroke="#e05050" stroke-width="1.2"/></svg>
<svg class="a" style="left:133.6px;top:331.5px" width="12" height="8.5" viewBox="0 0 12 8.5"><path d="M0.9 4 L6 1.2 L11.1 4 L6 6.8Z" fill="#dce0f8" stroke="#505060" stroke-width=".8"/><g fill="#f02020"><ellipse cx="0.9" cy="4" rx=".9" ry="1.2"/><ellipse cx="11.1" cy="4" rx=".9" ry="1.2"/><ellipse cx="6" cy="1.3" rx=".9" ry="1.2"/><ellipse cx="6" cy="6.9" rx=".9" ry="1.3"/></g></svg>
<svg class="a" style="left:147.8px;top:330.8px" width="12" height="11.5" viewBox="0 0 12 11.5"><path d="M6 0.5 L11.2 3 V8.2 L6 10.8 L0.8 8.2 V3 Z" fill="#d8d8e8" stroke="#404048" stroke-width=".9"/><path d="M0.8 3 L6 5.6 L11.2 3 M6 5.6V10.8 M6 0.5 V5.6" stroke="#505058" stroke-width=".5" fill="none"/><g><circle cx="6" cy="1.7" r="1" fill="#e81818"/><circle cx="4.2" cy="3.6" r=".9" fill="#1830f0"/><circle cx="7.6" cy="3.6" r=".9" fill="#20b050"/><circle cx="3" cy="5.4" r="1" fill="#e81818"/><circle cx="9" cy="5.4" r="1" fill="#e81818"/><circle cx="2.5" cy="7.8" r=".9" fill="#1830f0"/><circle cx="4.4" cy="7.8" r=".9" fill="#20b050"/><circle cx="7.6" cy="7.8" r=".9" fill="#1830f0"/><circle cx="9.4" cy="7.8" r=".9" fill="#20b050"/></g></svg>
<svg class="a" style="left:162.4px;top:331px" width="12" height="11" viewBox="0 0 12 11"><path d="M9.2 1.2 L3 7.2" stroke="#4a68a8" stroke-width="2.6" stroke-linecap="round"/><path d="M1.2 8.6 Q2 7.2 3.5 7.5 L6.2 8.6 L6 10 L1.5 10Z" fill="#3c5a9a"/><path d="M5.6 6.4 L9.6 5.2 L9.8 7.8 L6.2 9.6Z" fill="#a8b6d0"/><circle cx="10.3" cy="3.7" r=".9" fill="#f02020"/></svg>
<svg class="a" style="left:177.5px;top:330.8px" width="10" height="11.5" viewBox="0 0 10 11.5"><g fill="#ffe400" stroke="#f0a800" stroke-width=".5"><circle cx="2.4" cy="7" r="1.9"/><circle cx="6.6" cy="6.3" r="1.9"/><circle cx="4.8" cy="9" r="1.9"/></g><path d="M4.8 0.3 V4.5" stroke="#e00000" stroke-width="1.3"/><path d="M3 4 H6.6 L4.8 6.5Z" fill="#e00000"/></svg>
<svg class="a" style="left:189.8px;top:330.8px" width="12" height="11" viewBox="0 0 12 11"><path d="M0.5 2.6 Q4 2.4 8 0.3 V7.6 Q4 8.5 0.5 9.8 Z" fill="#f8f8f8" stroke="#a0a0a0" stroke-width=".6"/><path d="M2.6 2.8V8.8" stroke="#3070f0" stroke-width="1.5"/><path d="M5 2.3V8.2" stroke="#20c030" stroke-width="1.5"/><path d="M7.2 1.2V7.6" stroke="#f03020" stroke-width="1.3"/><text x="6.3" y="10.8" font-size="4.6" font-weight="bold" font-family="Liberation Sans" fill="#202020">4X</text></svg>
<svg class="a" style="left:204.7px;top:330.8px" width="11" height="11" viewBox="0 0 11 11"><path d="M0.8 8.5 Q1 7 4 7 Q6.5 7 6.8 8.5 Q6.5 10.3 3.5 10.3 Q0.8 10.2 0.8 8.5Z" fill="#3a5a98"/><path d="M1 5.5 Q4 4.6 6.5 6.5 Q7.5 7.5 9 7" stroke="#f05060" stroke-width="1.1" fill="none"/><path d="M1.5 4 Q5 3 8 4.5 Q9 5 10 4.5" stroke="#30c060" stroke-width="1.1" fill="none"/><path d="M1.5 2.5 Q5 1 7 2.5 Q8.5 3.5 10.3 2.8" stroke="#5050e0" stroke-width="1.2" fill="none"/><path d="M7.8 0.5 L9.8 1.5 L9 3 L7.5 2.2Z" fill="#405890"/></svg>
<svg class="a" style="left:218.6px;top:331px" width="11" height="11" viewBox="0 0 11 11"><path d="M0.6 1 Q3 0.3 5.5 1.2 Q5.5 6 9 9.8 Q4 10 2 6.5 Q0.6 4 0.6 1Z" fill="#a0a8e0"/><g stroke="#4a5090" stroke-width=".55" fill="none" opacity=".85"><path d="M1 2 Q4 5 8.5 9.5 M2.5 1 Q4 6 7 9.8 M0.8 4 Q3.5 3 5.4 2.5 M1.5 6.5 Q4 5.5 6.2 5 M3 8.5 Q5.5 7.8 7.8 7.8"/></g><path d="M5 4.5 L8.4 2.4" stroke="#303030" stroke-width=".6"/><circle cx="8.6" cy="2.3" r="1" fill="#202020"/></svg>
<svg class="a" style="left:232px;top:330.8px" width="12" height="11" viewBox="0 0 12 11"><rect x="0.5" y="1.5" width="11" height="9" fill="#f8f8f8" stroke="#a8a8a8" stroke-width=".8"/><rect x="0.9" y="1.9" width="10.2" height="1.8" fill="#b8b8b8"/><path d="M1 6.5H11M6 4V10" stroke="#e0e0e0" stroke-width=".6"/><circle cx="2.7" cy="2.7" r="2.5" fill="#1a1ab8"/><path d="M2.7 1.5V4" stroke="#fff" stroke-width=".8"/></svg>
<div class="a" style="left:248.3px;top:330px;width:1px;height:1px;background:#505050"></div><div class="a" style="left:248.3px;top:334px;width:1px;height:1px;background:#505050"></div><div class="a" style="left:248.3px;top:337px;width:1px;height:1px;background:#505050"></div><div class="a" style="left:248.3px;top:341px;width:1px;height:1px;background:#505050"></div>
<svg class="a" style="left:252.5px;top:330.8px" width="11" height="11" viewBox="0 0 11 11"><path d="M8.8 1.5 L6.5 6" stroke="#4c70b0" stroke-width="2.4" stroke-linecap="round"/><path d="M1 8 Q1 7.2 2 7.2 L6.5 6.2 L7.5 7 L6.8 9.6 L1.3 10Z" fill="#3e62a8"/><path d="M1.2 4.5 L5.2 1.2" stroke="#303030" stroke-width=".7"/><circle cx="1.2" cy="4.5" r=".9" fill="#202020"/><circle cx="5.2" cy="1.3" r=".9" fill="#202020"/><path d="M7.6 7 L9.8 9.6 M9.8 7 L7.6 9.6" stroke="#505050" stroke-width=".8"/></svg>
<svg class="a" style="left:266.8px;top:331.3px" width="11" height="10" viewBox="0 0 11 10"><ellipse cx="5.5" cy="4.2" rx="5.2" ry="4" fill="#8a8a8a"/><g fill="#a8a8a8"><ellipse cx="3.5" cy="3" rx="1.6" ry="1"/><ellipse cx="7" cy="3.2" rx="1.5" ry="1"/><ellipse cx="5" cy="5.5" rx="2" ry="1"/></g><path d="M3 7 L3 9.6 L5.5 7.6Z" fill="#8a8a8a"/></svg>
<svg class="a" style="left:280.6px;top:330.8px" width="12" height="11" viewBox="0 0 12 11"><path d="M0.5 9.5 Q0.5 8 2 7.5 L4.5 6.5 L6.5 2 L8.5 0.5 L11.3 8.5 L9 9.3 L2.5 10.2Z" fill="url(#bl)"/><path d="M8.5 0.5 L11.3 8.5 L9 9.3Z" fill="#c0cce8" opacity=".8"/></svg>
<svg class="a" style="left:294.4px;top:330.8px" width="12" height="11" viewBox="0 0 12 11"><path d="M1 2.5 L5 1 L8 2 V6 L4 7.5 L1 6.5Z" fill="#6a6a98"/><path d="M4.5 0.5L7.5 0V2L4.5 3Z" fill="#8a8ab8"/><path d="M3 6.5 L7 5 L11.5 6.5 V10 L7 10.8 L3 10Z" fill="#7a7aa8"/><circle cx="7" cy="7.5" r="1.5" fill="#c8c8e0"/></svg>
<svg class="a" style="left:308.2px;top:330.8px" width="12" height="11" viewBox="0 0 12 11"><rect x="0.8" y="5" width="6.2" height="6" fill="#c8c8c8"/><rect x="1.3" y="5.5" width="2.2" height="5.5" fill="#e8e8e8"/><rect x="4.3" y="6" width="2.2" height="5" fill="#888"/><path d="M0.5 4 Q2.5 0.5 5 2.5 Q7.5 5.5 11.5 4.2" stroke="#f02828" stroke-width="1.3" fill="none"/><path d="M4 5.5 Q7 3 11.5 0.6" stroke="#2838f0" stroke-width="1.2" fill="none"/></svg>
<div class="a" style="left:325px;top:330px;width:1px;height:1px;background:#505050"></div><div class="a" style="left:325px;top:334px;width:1px;height:1px;background:#505050"></div><div class="a" style="left:325px;top:337px;width:1px;height:1px;background:#505050"></div><div class="a" style="left:325px;top:341px;width:1px;height:1px;background:#505050"></div>
<svg class="a" style="left:329px;top:329.8px" width="11" height="11" viewBox="0 0 11 11"><circle cx="5.5" cy="5.5" r="5.2" fill="url(#mb)" stroke="#40407a" stroke-width=".6"/><g fill="#fff"><path d="M4 2.5 V7 H8" stroke="#fff" stroke-width="1.2" fill="none"/><path d="M3 4.5H5.5" stroke="#fff" stroke-width=".8"/></g></svg>
<svg class="a" style="left:342.5px;top:336px" width="4" height="3" viewBox="0 0 4 3"><path d="M0 0.5H3L1.5 2.2z" fill="#000"/></svg>
<svg class="a" style="left:348.3px;top:329.8px" width="11" height="11" viewBox="0 0 11 11"><circle cx="5.5" cy="5.5" r="5.2" fill="url(#mb)" stroke="#40407a" stroke-width=".6"/><g fill="#fff"><path d="M3 3 L5.5 5.5 L3 8Z M8.2 2.8 V8.2 L4 5.5Z"/></g></svg>
<svg class="a" style="left:361.9px;top:329.8px" width="11" height="11" viewBox="0 0 11 11"><circle cx="5.5" cy="5.5" r="5.2" fill="url(#mb)" stroke="#40407a" stroke-width=".6"/><g fill="#fff"><path d="M5.8 2.8 V8.2 L2.2 5.5Z M9 2.8 V8.2 L5.4 5.5Z"/></g></svg>
<svg class="a" style="left:376.2px;top:329.8px" width="11" height="11" viewBox="0 0 11 11"><circle cx="5.5" cy="5.5" r="5.2" fill="url(#mb)" stroke="#40407a" stroke-width=".6"/><g fill="#fff"><path d="M3.8 2.6 V8.4 L8.4 5.5Z"/></g></svg>
<svg class="a" style="left:390px;top:329.8px" width="11" height="11" viewBox="0 0 11 11"><circle cx="5.5" cy="5.5" r="5.2" fill="url(#mb)" stroke="#40407a" stroke-width=".6"/><g fill="#fff"><path d="M2 2.8 V8.2 L5.6 5.5Z M5.2 2.8 V8.2 L8.8 5.5Z"/></g></svg>
<svg class="a" style="left:404px;top:329.8px" width="11" height="11" viewBox="0 0 11 11"><circle cx="5.5" cy="5.5" r="5.2" fill="url(#mb)" stroke="#40407a" stroke-width=".6"/><g fill="#fff"><path d="M2.8 2.8 V8.2 L7 5.5Z M8 3 L5.5 5.5 L8 8Z"/></g></svg>
<div class="a" style="left:417px;top:332.3px;width:85px;height:3.8px;background:linear-gradient(#d4d4d4,#bcbcbc)"></div>
<div class="a" style="left:486.5px;top:332.5px;width:7px;height:3px;background:#fafafa;border-bottom:1px solid #b0b0b0"></div>
<div class="a" style="left:494.5px;top:332.5px;width:7px;height:3px;background:#fafafa;border-bottom:1px solid #b0b0b0"></div>
<div class="a" style="left:417px;top:338px;width:85px;height:2px;background:linear-gradient(#d0d0d0,#c0c0c0)"></div>
<div class="a" style="left:491.5px;top:338px;width:10px;height:2px;background:#9c9c9c"></div>
<svg class="a" style="left:504.2px;top:329.8px" width="11" height="11" viewBox="0 0 11 11"><circle cx="5.5" cy="5.5" r="5.2" fill="url(#mb)" stroke="#40407a" stroke-width=".6"/><g fill="#fff"><circle cx="5.5" cy="5.5" r="2.6" fill="none" stroke="#fff" stroke-width="1.6" stroke-dasharray="1.2 .85"/><circle cx="5.5" cy="5.5" r="2" fill="none" stroke="#fff" stroke-width="1"/></g></svg>
<div class="a" style="left:1px;top:347px;width:618px;height:1px;background:#d0d0d0"></div>
<div class="a" style="left:1px;top:348px;width:618px;height:1px;background:#fcfcfc"></div>
<div class="a t" style="left:3px;top:352.65px;transform:scaleX(0.94);transform-origin:0 0">Result type:</div>
<div class="a " style="left:129.8px;top:352px;width:10px;height:9px;background:#ececec;border-right:1.5px solid #8c8c8c;border-bottom:1px solid #8c8c8c"><div class="a" style="left:1px;top:1.5px;width:7px;height:1px;background:#e0e0e0"></div><div class="a t" style="left:1.6px;top:0.9px;font-size:6px;color:#888">...</div></div>
<div class="a combo" style="left:5px;top:362px;width:134.5px;height:13px;"><div class="a t" style="left:1.5px;top:2.1px"><span style="display:inline-block;transform:scaleX(.95);transform-origin:0 0">Elem-X (v)</span></div><div class="dd"></div></div>
<div class="a t" style="left:6px;top:381.65px;">Layers:</div>
<div class="a combo cdis" style="left:54.5px;top:378.2px;width:57px;height:12.8px;"><div class="dd ddd"></div></div>
<svg class="a" style="left:114px;top:380px" width="16" height="11"><path d="M1.2 1.8 Q6.5 0.6 11.8 1.8 L7.6 6.2 V9.6 L5.4 9.2 V6.2 Z" fill="#b8cce8" stroke="#5a78b0" stroke-width=".9" stroke-linejoin="round"/><path d="M2.5 2.2 Q6.5 3.6 10.5 2.2 L7 5.8 H6Z" fill="#7e9ccc"/><path d="M14.5 6 h2 l-1 1.1z" fill="#b0b0b0"/></svg>
<div class="a t" style="left:6px;top:395.65px;transform:scaleX(0.965);transform-origin:0 0">Component:</div>
<div class="a cb" style="left:10px;top:408px;width:6px;height:6px;"><svg class="a" style="left:0;top:0" width="5" height="5"><path d="M0.3 1.8 L1.9 3.6 L4.6 0.4" stroke="#000" stroke-width="1.3" fill="none"/></svg></div>
<div class="a t" style="left:19.2px;top:408.25px;font-size:7.8px">X</div>
<div class="a cb" style="left:29px;top:408px;width:6px;height:6px;"><svg class="a" style="left:0;top:0" width="5" height="5"><path d="M0.3 1.8 L1.9 3.6 L4.6 0.4" stroke="#000" stroke-width="1.3" fill="none"/></svg></div>
<div class="a t" style="left:38.2px;top:408.25px;font-size:7.8px">Y</div>
<div class="a cb" style="left:48px;top:408px;width:6px;height:6px;"><svg class="a" style="left:0;top:0" width="5" height="5"><path d="M0.3 1.8 L1.9 3.6 L4.6 0.4" stroke="#000" stroke-width="1.3" fill="none"/></svg></div>
<div class="a t" style="left:57.2px;top:408.25px;font-size:7.8px">Z</div>
<div class="a t" style="left:144.3px;top:352.65px;">Selection:</div>
<div class="a btn" style="left:147.5px;top:362.2px;width:13.3px;height:13.4px;"><svg class="a" style="left:3px;top:4px" width="7" height="5"><path d="M0.5 0.5 H5.5 L3 3.5z" fill="#000"/></svg></div>
<div class="a ybtn" style="left:160.8px;top:362.2px;width:70.2px;height:13.4px;"><div class="a t" style="left:-1px;right:0;top:0.9px;text-align:center">Components</div></div>
<div class="a btn" style="left:231px;top:362.5px;width:14px;height:12.5px;"><svg class="a" style="left:4px;top:3.5px" width="6" height="6"><path d="M0.5 0 V5" stroke="#000"/><path d="M5 0 V5 L1.2 2.5z" fill="#000"/></svg></div>
<div class="a t" style="left:144.3px;top:380.65px;">Resolved in:</div>
<div class="a combo" style="left:150px;top:390px;width:96.5px;height:13px;"><div class="a t" style="left:1.5px;top:2.1px">Analysis System</div><div class="dd"></div></div>
<div class="a ybtn2" style="left:150px;top:405.5px;width:83.5px;height:13.5px;"><div class="a t dis" style="left:0;right:0;top:2px;text-align:center;color:#9a9a7a">System</div></div>
<div class="a btn" style="left:233.5px;top:405.5px;width:13px;height:13.5px;"><svg class="a" style="left:3.5px;top:3.5px" width="6" height="6"><path d="M0.5 0 V5" stroke="#999"/><path d="M5 0 V5 L1.2 2.5z" fill="#999"/></svg></div>
<div class="a cb cbd" style="left:151px;top:424px;width:6px;height:6px;"></div>
<div class="a t dis" style="left:159.8px;top:423.25px;">Use tracking system</div>
<div class="a btn" style="left:253.5px;top:431.5px;width:43.5px;height:13px;"><div class="t" style="position:absolute;left:0;right:0;top:1.3px;text-align:center">Apply</div></div>
<div class="a sep" style="left:298.5px;top:352px;width:2px;height:92.5px;"></div>
<div class="a t" style="left:302.5px;top:352.65px;">Display options:</div>
<div class="a t" style="left:304.5px;top:365.65px;transform:scaleX(0.965);transform-origin:0 0">Size scaling:</div>
<div class="a combo" style="left:349px;top:362.5px;width:52.5px;height:13.5px;"><div class="a t" style="left:1.5px;top:2.35px">Auto</div><div class="dd"></div></div>
<div class="a fld" style="left:405px;top:363px;width:38.5px;height:12px;"><div class="a t dis" style="right:0.6px;top:1.6px">0.282843</div></div>
<div class="a t" style="left:304.5px;top:381.45px;transform:scaleX(0.95);transform-origin:0 0">Show:</div>
<div class="a combo" style="left:349px;top:378px;width:52.5px;height:13.5px;"><div class="a t" style="left:1.5px;top:2.35px">Resultant</div><div class="dd"></div></div>
<div class="a t" style="left:304.5px;top:396.15px;">Color by:</div>
<div class="a combo" style="left:349px;top:393px;width:52.5px;height:13.5px;"><div class="a t" style="left:1.5px;top:2.35px">Direction</div><div class="dd"></div></div>
<div class="a " style="left:407px;top:397px;width:6px;height:6px;background:#000"></div>
<div class="a t" style="left:416px;top:396.15px;">Resultant</div>
<div class="a t" style="left:304.5px;top:411.15px;">Vector heads:</div>
<div class="a combo" style="left:349px;top:408.5px;width:52.5px;height:13px;"><div class="a t" style="left:1.5px;top:2.1px">Arrow</div><div class="dd"></div></div>
<div class="a combo" style="left:405px;top:408.5px;width:38.5px;height:13px;"><div class="a t" style="left:1.5px;top:2.1px">Tail</div><div class="dd"></div></div>
<div class="a t" style="left:304.5px;top:424.65px;transform:scaleX(0.95);transform-origin:0 0">Show values:</div>
<div class="a cb" style="left:350px;top:425.5px;width:6px;height:6px;"></div>
<div class="a " style="left:358.5px;top:423px;width:1px;height:9.5px;background:#8c8c8c"></div>
<div class="a sep" style="left:448.5px;top:352px;width:2px;height:92.5px;"></div>
<div class="a t" style="left:451.5px;top:352.65px;">Legend threshold:</div>
<div class="a cb cbd" style="left:456px;top:366px;width:6px;height:6px;"></div>
<div class="a t dis" style="left:465.5px;top:365.15px;">Max:</div>
<div class="a fld" style="left:485.5px;top:362.5px;width:28.5px;height:12px;"><div class="a t dis" style="right:2px;top:1.6px;color:#909090;font-size:7.4px">0</div></div>
<div class="a cb cbd" style="left:456px;top:381px;width:6px;height:6px;"></div>
<div class="a t dis" style="left:465.5px;top:379.65px;">Min:</div>
<div class="a fld" style="left:485.5px;top:377.5px;width:28.5px;height:12px;"><div class="a t dis" style="right:2px;top:1.6px;color:#909090;font-size:7.4px">0</div></div>
<div class="a t" style="left:453.5px;top:393.15px;transform:scaleX(0.95);transform-origin:0 0">Multiplier:</div>
<div class="a fld" style="left:485.5px;top:391.5px;width:28.5px;height:12.5px;"><div class="a t dis" style="right:2px;top:1.8px;color:#606060;font-size:7.4px">1</div></div>
<div class="a btn" style="left:461px;top:431px;width:54px;height:13.5px;"><div class="t dis" style="position:absolute;left:0;right:0;top:1.55px;text-align:center">Edit Legend...</div></div>
<div class="a sep" style="left:517.5px;top:352px;width:2px;height:92.5px;"></div>
<div class="a t" style="left:520px;top:352.65px;">Result display control:</div>
<div class="a cb" style="left:524.5px;top:363px;width:6px;height:6px;"></div>
<div class="a t" style="left:533.5px;top:362.15px;">Overlay result display</div>
<div class="a btn" style="left:523px;top:372px;width:64px;height:11px;"><div class="t" style="position:absolute;left:0;right:0;top:0.3px;text-align:center">Clear Vector</div></div>
<div class="a btn" style="left:523px;top:385px;width:64px;height:11.5px;"><div class="t" style="position:absolute;left:0;right:0;top:0.55px;text-align:center"><span style="display:inline-block;transform:scaleX(.955)">Create Plot Style...</span></div></div>
<div class="a btn" style="left:523px;top:432.5px;width:64px;height:12px;"><div class="t" style="position:absolute;left:0;right:0;top:0.8px;text-align:center">Query Results...</div></div>
</body></html>
